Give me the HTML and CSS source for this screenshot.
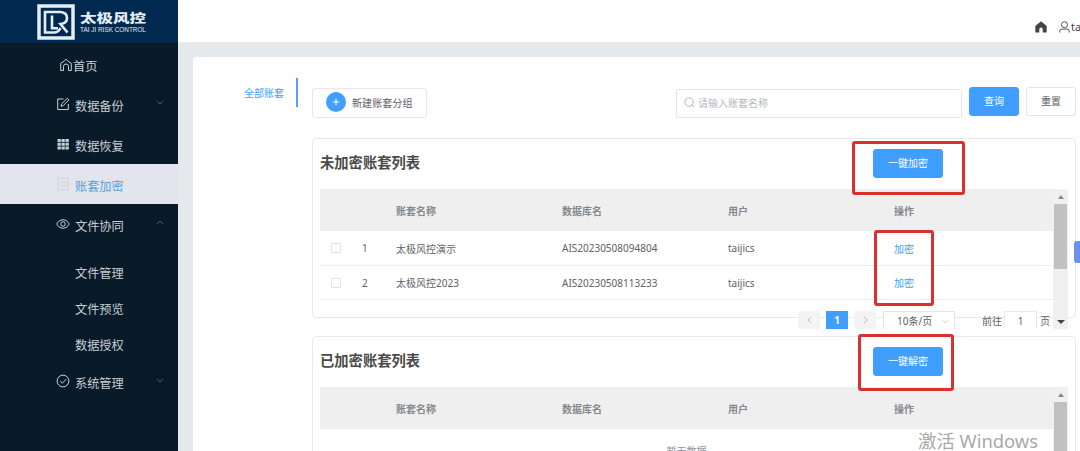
FILE: index.html
```
<!DOCTYPE html>
<html lang="zh-CN">
<head>
    <meta charset="UTF-8">
    <meta name="viewport" content="width=device-width, initial-scale=1.0">
    <title>账套加密</title>
    <link rel="stylesheet" href="styles.css">
</head>
<body>
    <aside class="sidebar">
        <div class="logo">
            <svg class="logo-mark" viewBox="0 0 38 36" width="38" height="36">
                <rect x="2" y="2" width="34" height="32" fill="#01294f" stroke="#e3edf5" stroke-width="3.500"/>
                <path d="M17 8H8v20.500h9.500q4-.3 6-4.500M15 11.500v12.800h6M14 8h9.500q6.500.5 6.500 6t-6.500 6l7 8.500" fill="none" stroke="#e3edf5" stroke-width="2.600"/>
            </svg>
            <div class="logo-text">
                <span class="logo-cn">太极风控</span>
                <span class="logo-en">TAI JI RISK CONTROL</span>
            </div>
        </div>
        <nav class="menu">
            <div class="menu-item home">
                <svg class="icon" viewBox="0 0 14 14"><path d="M4.500 12.500H1.700V5.300L5 3.300 7 1.200l2 2.100 3.300 2v7.200H9.500V8.300Q9.500 6 7 6T4.500 8.300z"/></svg>
                <span>首页</span>
            </div>
            <div class="menu-item">
                <svg class="icon" viewBox="0 0 14 14"><path d="M7.500 2H1.700v10.500h10.600V7M5 9.300l.5-2.300L11.300 1.300l1.600 1.600L7.200 8.700z"/></svg>
                <span>数据备份</span>
                <svg class="arrow" viewBox="0 0 8 5"><path d="M1 1l3 3 3-3"/></svg>
            </div>
            <div class="menu-item">
                <svg class="icon solid" viewBox="0 0 14 14"><path d="M1.500 2h3.300v3H1.500zM5.500 2h3.300v3H5.500zM9.500 2h3.300v3H9.500zM1.500 5.700h3.300v3H1.500zM5.500 5.700h3.300v3H5.500zM9.500 5.700h3.300v3H9.500zM1.500 9.400h3.300v3H1.500zM5.500 9.400h3.300v3H5.500zM9.500 9.400h3.300v3H9.500z"/></svg>
                <span>数据恢复</span>
            </div>
            <div class="menu-item active">
                <svg class="icon" viewBox="0 0 14 14"><path d="M2 1.200h10.300v11.600H2zM4.500 4.500h5.300M4.500 7h5.300M4.500 9.500h5.300"/></svg>
                <span>账套加密</span>
            </div>
            <div class="menu-item">
                <svg class="icon" viewBox="0 0 14 14"><path d="M.6 7Q3 2.600 7 2.600T13.400 7Q11 11.400 7 11.400T.6 7z"/><circle cx="7" cy="7" r="2.300"/></svg>
                <span>文件协同</span>
                <svg class="arrow" viewBox="0 0 8 5"><path d="M1 4l3-3 3 3"/></svg>
            </div>
            <div class="submenu">
                <div class="submenu-item">文件管理</div>
                <div class="submenu-item">文件预览</div>
                <div class="submenu-item">数据授权</div>
            </div>
            <div class="menu-item">
                <svg class="icon" viewBox="0 0 14 14"><circle cx="7" cy="7" r="5.900"/><path d="M4.200 7l2.200 2.200 3.800-4"/></svg>
                <span>系统管理</span>
                <svg class="arrow" viewBox="0 0 8 5"><path d="M1 1l3 3 3-3"/></svg>
            </div>
        </nav>
    </aside>

    <main class="main">
        <header class="topbar">
            <svg class="top-home" viewBox="0 0 12 12"><path d="M6 .3 11.700 5v6.500H7.700V8.300a1.700 1.700 0 0 0-3.400 0v3.200H.3V5z"/></svg>
            <svg class="top-user" viewBox="0 0 12 13"><circle cx="6" cy="4" r="3.300"/><path d="M.8 12.500V11Q.8 8.800 3 8.800h6q2.200 0 2.200 2.200v1.500"/></svg>
            <span class="username">taijics</span>
        </header>

        <div class="panel">
            <div class="groups">
                <div class="group-tab">全部账套</div>
            </div>
            <div class="content">
                <div class="toolbar">
                    <button class="btn-group"><span class="plus"><svg viewBox="0 0 8 8"><path d="M4 .8v6.400M.8 4h6.400"/></svg></span>新建账套分组</button>
                    <div class="search">
                        <svg viewBox="0 0 11 11"><circle cx="5" cy="5" r="4.200"/><path d="M8 8l2.200 2.200"/></svg>
                        <span>请输入账套名称</span>
                    </div>
                    <button class="btn primary">查询</button>
                    <button class="btn">重置</button>
                </div>

                <section class="card">
                    <div class="card-head">
                        <h2>未加密账套列表</h2>
                        <button class="btn primary wide">一键加密</button>
                    </div>
                    <div class="table-wrap">
                        <div class="table">
                            <div class="row head"><span></span><span></span><span>账套名称</span><span>数据库名</span><span>用户</span><span>操作</span></div>
                            <div class="row"><i class="check"></i><span class="num">1</span><span>太极风控演示</span><span>AIS20230508094804</span><span>taijics</span><span class="link">加密</span></div>
                            <div class="row"><i class="check"></i><span class="num">2</span><span>太极风控2023</span><span>AIS20230508113233</span><span>taijics</span><span class="link">加密</span></div>
                            <div class="pagination">
                                <span class="page"><svg viewBox="0 0 5 8"><path d="M4 1 1 4l3 3"/></svg></span>
                                <span class="page current">1</span>
                                <span class="page"><svg viewBox="0 0 5 8"><path d="M1 1l3 3-3 3"/></svg></span>
                                <span class="page-size">10条/页<svg viewBox="0 0 8 5"><path d="M1 1l3 3 3-3"/></svg></span>
                                <span class="jump">前往</span>
                                <span class="jump-input">1</span>
                                <span class="jump-unit">页</span>
                            </div>
                        </div>
                        <div class="scrollbar"><i class="up"></i><i class="thumb"></i><i class="down"></i></div>
                    </div>
                </section>

                <section class="card">
                    <div class="card-head">
                        <h2>已加密账套列表</h2>
                        <button class="btn primary wide">一键解密</button>
                    </div>
                    <div class="table-wrap">
                        <div class="table">
                            <div class="row head"><span></span><span></span><span>账套名称</span><span>数据库名</span><span>用户</span><span>操作</span></div>
                            <div class="empty">暂无数据</div>
                        </div>
                        <div class="scrollbar"><i class="up"></i><i class="thumb"></i><i class="down"></i></div>
                    </div>
                </section>
            </div>
        </div>
    </main>

    <div class="side-handle"></div>
    <div class="watermark">激活 Windows</div>
    <div class="mark mark-encrypt"></div>
    <div class="mark mark-rows"></div>
    <div class="mark mark-decrypt"></div>
</body>
</html>
```
FILE: styles.css
```
* {
    box-sizing: border-box;
}
html {
    height: 451px;
    overflow: hidden;
}
body {
    margin: 0;
    height: 451px;
    display: flex;
    position: relative;
    overflow: hidden;
    background: #e6e9ec;
    color: #606266;
    font-family: "Noto Sans", "Noto Sans CJK SC", sans-serif;
    font-size: 10px;
}
svg {
    fill: none;
    stroke: currentColor;
    flex: none;
}
button {
    font-family: inherit;
}

/* sidebar */
.sidebar {
    width: 178px;
    flex: none;
    background: #091a28;
}
.logo {
    height: 43px;
    padding: 4px 0 0 37px;
    display: flex;
    gap: 5px;
    background: #01294f;
    color: #e3edf5;
}
.logo-text {
    padding-top: 7px;
    display: flex;
    flex-direction: column;
    white-space: nowrap;
}
.logo-cn {
    font-family: "Noto Sans CJK SC", sans-serif;
    font-size: 16.500px;
    font-weight: 900;
    line-height: 15px;
    transform: scaleY(0.75);
}
.logo-en {
    font-family: "Liberation Sans", sans-serif;
    font-size: 6.400px;
    line-height: 7px;
}
.menu {
    padding-top: 1px;
}
.menu-item {
    height: 40px;
    padding: 3px 14px 0 56px;
    display: flex;
    align-items: center;
    color: #c8d0d6;
    font-size: 12.200px;
}
.menu-item .icon {
    width: 14px;
    height: 14px;
    margin: -4px 5px 0 0;
}
.menu-item.home {
    padding-left: 59px;
}
.menu-item.home .icon {
    margin: -2px 0 0;
}
.icon.solid {
    fill: currentColor;
    stroke: none;
}
.arrow {
    width: 8px;
    height: 5px;
    margin: -6px 0 0 auto;
    color: #50606d;
}
.menu-item.active {
    background: #e2e5ed;
    color: #5a9fe0;
}
.menu-item.active .icon {
    color: #d0d3d8;
}
.submenu {
    padding-top: 11px;
}
.submenu-item {
    height: 36px;
    padding-left: 75px;
    line-height: 38px;
    color: #c8d0d6;
    font-size: 12.200px;
}
.submenu + .menu-item {
    padding-top: 0;
}

/* top bar */
.main {
    flex: 1;
    min-width: 0;
    height: 451px;
    display: flex;
    flex-direction: column;
}
.topbar {
    height: 42px;
    flex: none;
    padding: 11px 0 0 857px;
    display: flex;
    align-items: center;
    overflow: hidden;
    background: #fff;
    color: #444;
}
.top-home {
    width: 12px;
    height: 12px;
    fill: #444;
    stroke: none;
}
.top-user {
    width: 11px;
    height: 12px;
    margin-left: 12px;
}
.username {
    margin-left: 1px;
    font-size: 11px;
}

/* content */
.panel {
    flex: 1;
    min-height: 0;
    margin: 15px 0 0 15px;
    display: flex;
    overflow: hidden;
    border-radius: 4px 0 0 0;
    background: #fff;
}
.groups {
    width: 105px;
    padding-top: 21px;
}
.group-tab {
    height: 29px;
    padding-right: 12px;
    border-right: 2px solid #5a9ff0;
    color: #409eff;
    line-height: 30px;
    text-align: right;
}
.content {
    width: 764px;
    margin-left: 14px;
    padding-top: 30px;
}
.toolbar {
    height: 51px;
    display: flex;
    align-items: flex-start;
}
.btn-group {
    width: 115px;
    height: 30px;
    margin-top: 1px;
    padding: 0 0 2px 13px;
    display: flex;
    align-items: center;
    border: 1px solid #e6e8ec;
    border-radius: 3px;
    background: #fff;
    color: #606266;
    font-size: 10.100px;
    white-space: nowrap;
}
.plus {
    width: 20px;
    height: 20px;
    margin-right: 6px;
    display: flex;
    align-items: center;
    justify-content: center;
    border-radius: 50%;
    background: #409eff;
    color: #fff;
}
.plus svg {
    width: 8px;
    height: 8px;
}
.search {
    width: 286px;
    height: 29px;
    margin: 2px 7px 0 249px;
    padding: 0 0 2px 7px;
    display: flex;
    align-items: center;
    gap: 3px;
    border: 1px solid #e2e5ea;
    border-radius: 2px;
    color: #b4b8c0;
}
.search svg {
    width: 11px;
    height: 11px;
}
.btn {
    width: 50px;
    height: 29px;
    padding: 0 0 2px;
    border: 1px solid #e2e5ea;
    border-radius: 3px;
    background: #fff;
    color: #606266;
    font-size: 10px;
}
.btn + .btn {
    margin-left: 7px;
}
.btn.primary {
    border-color: #409eff;
    background: #409eff;
    color: #fff;
}
.btn.wide {
    width: 70px;
}
.card {
    height: 180px;
    margin-bottom: 18px;
    padding: 0 7px;
    border: 1px solid #e8eaee;
    border-radius: 4px;
}
.card-head {
    height: 50px;
    padding-top: 10px;
    display: flex;
    justify-content: space-between;
}
.card-head h2 {
    margin: 0;
    color: #4a4a4a;
    font-size: 14.300px;
    line-height: 27px;
}
.card-head .btn {
    margin-right: 125px;
}
.table-wrap {
    height: 140px;
    display: flex;
}
.table {
    width: 733px;
    overflow: hidden;
}
.row {
    height: 34px;
    display: grid;
    grid-template-columns: 30px 46px 166px 166px 166px 1fr;
    align-items: center;
    border-bottom: 1px solid #ebeef2;
}
.row.head {
    height: 42px;
    padding-top: 2px;
    background: #efefef;
    color: #85888d;
    font-weight: 600;
}
.row.head + .row {
    height: 35px;
}
.check {
    width: 10px;
    height: 10px;
    margin-left: 11px;
    border: 1px solid #dfe2e6;
    border-radius: 1px;
}
.num {
    padding-left: 12px;
}
.link {
    color: #409eff;
}
.pagination {
    height: 29px;
    padding: 11px 0 0 478px;
    display: flex;
    white-space: nowrap;
    line-height: 20px;
}
.page {
    width: 22px;
    height: 18px;
    margin-right: 6px;
    flex: none;
    display: flex;
    align-items: center;
    justify-content: center;
    background: #f4f4f5;
    color: #b4b8c0;
}
.page svg {
    width: 5px;
    height: 8px;
}
.page.current {
    background: #409eff;
    color: #fff;
    font-weight: 700;
}
.page-size {
    width: 72px;
    height: 20px;
    margin-left: 1px;
    padding: 0 5px 0 13px;
    flex: none;
    display: flex;
    align-items: center;
    justify-content: space-between;
    border: 1px solid #e2e5ea;
    background: #fff;
}
.page-size svg {
    width: 7px;
    height: 5px;
    color: #c0c4cc;
}
.jump {
    margin-left: 27px;
}
.jump-input {
    width: 33px;
    height: 20px;
    margin: 0 3px 0 2px;
    flex: none;
    border: 1px solid #e6e8ec;
    background: #fff;
    line-height: 18px;
    text-align: center;
}
.empty {
    padding-top: 14px;
    color: #909399;
    text-align: center;
}
.scrollbar {
    width: 15px;
    padding: 0 1px;
    display: flex;
    flex-direction: column;
    align-items: center;
    background: #f0f0f0;
}
.up {
    margin: 6px 0 5px;
    border: 3px solid transparent;
    border-top: 0;
    border-bottom: 4px solid #8a8a8a;
}
.thumb {
    width: 100%;
    height: 65px;
    background: #c1c1c1;
}
.down {
    margin: auto 0 5px;
    border: 4px solid transparent;
    border-bottom: 0;
    border-top: 4px solid #444;
}

/* overlays */
.side-handle {
    position: absolute;
    top: 241px;
    right: 0;
    width: 6px;
    height: 22px;
    border-radius: 3px 0 0 3px;
    background: #6c8ff2;
}
.watermark {
    position: absolute;
    top: 429px;
    left: 918px;
    color: #a9a9a9;
    font-size: 18.400px;
    line-height: 24px;
    white-space: nowrap;
}
.mark {
    position: absolute;
    border: 3px solid #d8322f;
    border-radius: 3px;
}
.mark-encrypt {
    top: 141px;
    left: 852px;
    width: 113px;
    height: 54px;
}
.mark-rows {
    top: 230px;
    left: 874px;
    width: 60px;
    height: 76px;
}
.mark-decrypt {
    top: 334px;
    left: 858px;
    width: 96px;
    height: 57px;
}
```
